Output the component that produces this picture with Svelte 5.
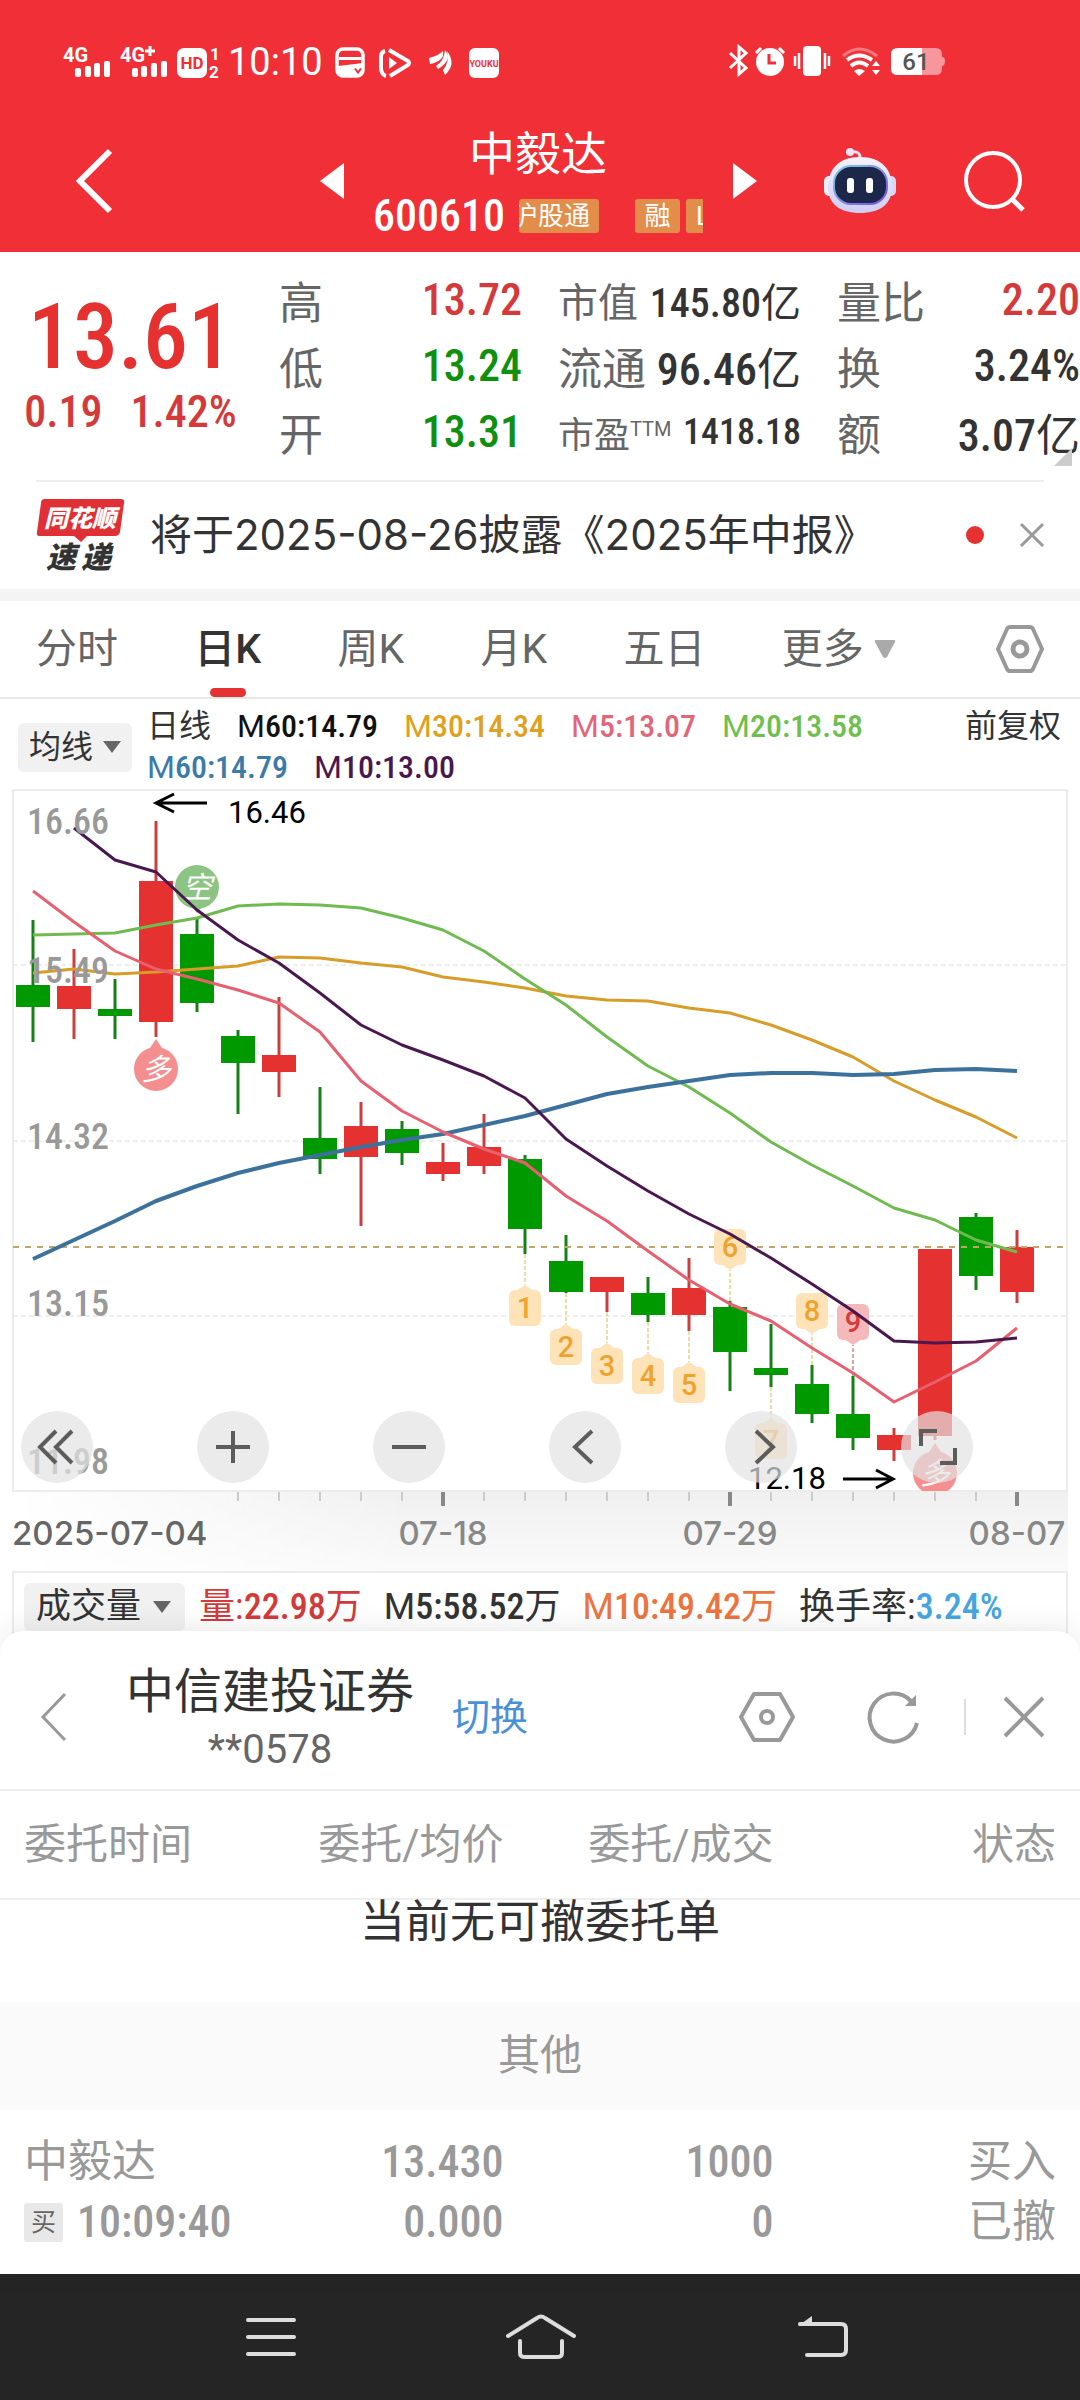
<script>
  const stats = [
    [
      { label: '高', value: '13.72', tone: 'up' },
      { label: '低', value: '13.24', tone: 'down' },
      { label: '开', value: '13.31', tone: 'down' }
    ],
    [
      { label: '市值', value: '145.80', unit: '亿', size: 'mid' },
      { label: '流通', value: '96.46', unit: '亿' },
      { label: '市盈', sup: 'TTM', value: '1418.18', size: 'small' }
    ],
    [
      { label: '量比', value: '2.20', tone: 'up' },
      { label: '换', value: '3.24%' },
      { label: '额', value: '3.07', unit: '亿' }
    ]
  ];

  const tabs = ['分时', '日K', '周K', '月K', '五日'];
  let activeTab = '日K';

  const legend = [
    { name: 'M', value: '60:14.79', color: '#111111' },
    { name: 'M', value: '30:14.34', color: '#e0a020' },
    { name: 'M', value: '5:13.07', color: '#e2667a' },
    { name: 'M', value: '20:13.58', color: '#6fbf50' },
    { name: 'M', value: '60:14.79', color: '#3c7aa8' },
    { name: 'M', value: '10:13.00', color: '#4a174f' }
  ];

  // x position of the n-th trading day
  const dayX = (i) => 33 + i * 41;

  // [rising, high, body top, body bottom, low]
  const candles = [
    [0, 921, 986, 1008, 1043],
    [1, 950, 987, 1010, 1040],
    [0, 980, 1010, 1017, 1040],
    [1, 822, 882, 1023, 1038],
    [0, 920, 935, 1004, 1013],
    [0, 1031, 1037, 1064, 1115],
    [1, 998, 1056, 1073, 1098],
    [0, 1088, 1139, 1160, 1175],
    [1, 1103, 1127, 1158, 1227],
    [0, 1122, 1130, 1154, 1166],
    [1, 1144, 1163, 1175, 1182],
    [1, 1115, 1148, 1167, 1175],
    [0, 1156, 1160, 1230, 1255],
    [0, 1236, 1262, 1293, 1294],
    [1, 1278, 1278, 1293, 1313],
    [0, 1278, 1294, 1316, 1323],
    [1, 1259, 1289, 1316, 1332],
    [0, 1302, 1308, 1353, 1392],
    [0, 1325, 1369, 1376, 1388],
    [0, 1366, 1385, 1415, 1424],
    [0, 1377, 1415, 1439, 1451],
    [1, 1429, 1436, 1451, 1462],
    [1, 1250, 1250, 1437, 1441],
    [0, 1214, 1218, 1277, 1291],
    [1, 1231, 1248, 1293, 1304]
  ];

  const averages = [
    {
      color: '#d89c28',
      width: 3,
      start: 0,
      ys: [974, 970, 975, 973, 970, 967, 958, 959, 964, 968, 978, 983, 989, 997, 1001, 1002, 1009, 1014, 1026, 1041, 1058, 1082, 1101, 1118, 1139]
    },
    {
      color: '#6fbb50',
      width: 3,
      start: 0,
      ys: [936, 935, 934, 926, 919, 907, 905, 906, 909, 919, 931, 952, 980, 1006, 1038, 1067, 1088, 1114, 1143, 1166, 1187, 1209, 1221, 1241, 1253]
    },
    {
      color: '#3c719b',
      width: 4,
      start: 0,
      ys: [1260, 1241, 1222, 1202, 1187, 1174, 1164, 1156, 1148, 1141, 1135, 1126, 1117, 1106, 1095, 1088, 1082, 1076, 1074, 1074, 1076, 1075, 1071, 1070, 1072]
    },
    {
      color: '#e8606f',
      width: 3,
      start: 0,
      ys: [892, 923, 952, 970, 980, 991, 1004, 1033, 1082, 1112, 1133, 1150, 1164, 1197, 1222, 1252, 1281, 1305, 1322, 1349, 1374, 1403, 1383, 1362, 1329]
    },
    {
      color: '#4a174f',
      width: 3,
      start: 1,
      ys: [829, 861, 873, 911, 941, 964, 994, 1026, 1046, 1061, 1077, 1099, 1140, 1167, 1192, 1215, 1235, 1259, 1285, 1312, 1342, 1344, 1343, 1339]
    }
  ];

  const points = (line) => line.ys.map((y, i) => `${dayX(i + line.start)},${y}`).join(' ');

  // numbered tags: tip is the pointed end, up = tag hangs below its candle
  const tags = [
    { n: 1, day: 12, tip: 1286, up: true },
    { n: 2, day: 13, tip: 1325, up: true },
    { n: 3, day: 14, tip: 1344, up: true },
    { n: 4, day: 15, tip: 1354, up: true },
    { n: 5, day: 16, tip: 1363, up: true },
    { n: 6, day: 17, tip: 1271, up: false },
    { n: 7, day: 18, tip: 1419, up: true },
    { n: 8, day: 19, tip: 1335, up: false },
    { n: 9, day: 20, tip: 1346, up: false, hot: true }
  ];

  const grid = [966, 1142, 1317];
  const prices = [
    ['16.66', 835],
    ['15.49', 984],
    ['14.32', 1150],
    ['13.15', 1317],
    ['11.98', 1475]
  ];
  const dates = [
    ['07-18', 10],
    ['07-29', 17],
    ['08-07', 24]
  ];
  const ticks = Array.from({ length: 20 }, (_, i) => i + 5);
  const major = (i) => i === 10 || i === 17 || i === 24;

  const tools = [
    { name: '最早', d: 'M35 20 L19 36 L35 52 M51 20 L35 36 L51 52' },
    { name: '放大', d: 'M19 36 H53 M36 20 V52' },
    { name: '缩小', d: 'M19 36 H53' },
    { name: '左移', d: 'M43 20 L26 36 L43 52' },
    { name: '右移', d: 'M31 20 L48 36 L31 52' },
    { name: '全屏', d: 'M20 35 V20 H36 M39 52 H54 V37' }
  ];
</script>

<div class="page">
  <header class="top">
    <div class="status">
      <div class="status-left">
        <svg width="162" height="36" viewBox="0 0 162 36" fill="#fff" aria-hidden="true">
          <text class="sig" x="0" y="18">4G</text>
          <g>
            <rect x="12" y="24" width="6" height="9" rx="2" />
            <rect x="22" y="22" width="6" height="11" rx="2" />
            <rect x="31" y="19" width="6" height="14" rx="2" />
            <rect x="41" y="17" width="6" height="16" rx="2" />
          </g>
          <text class="sig" x="57" y="18">4G</text>
          <path d="M82 7 h10 M87 2 v10" stroke="#fff" stroke-width="3" />
          <g>
            <rect x="69" y="24" width="6" height="9" rx="2" />
            <rect x="78" y="22" width="6" height="11" rx="2" />
            <rect x="88" y="19" width="6" height="14" rx="2" />
            <rect x="98" y="17" width="6" height="16" rx="2" />
          </g>
          <rect x="114" y="4" width="30" height="30" rx="7" />
          <text class="hd" x="129" y="25" text-anchor="middle">HD</text>
          <text class="sim" x="147" y="16">1</text>
          <text class="sim" x="146" y="34">2</text>
        </svg>
        <span class="clock">10:10</span>
        <svg width="170" height="36" viewBox="0 0 170 36" fill="none" aria-hidden="true">
          <rect x="2" y="5" width="26" height="27" rx="6" stroke="#fff" stroke-width="3.5" />
          <path d="M4 14.500 H26" stroke="#fff" stroke-width="3" />
          <path d="M3 22 L28 19 V28 Q28 32 23 32 H8 Q3 32 3 27Z" fill="#fff" />
          <path d="M20 24.500 l3 4 l3 -4" stroke="#f12f37" stroke-width="2" />
          <path d="M54 6 L73 17 Q75 19 73 21 L55 32 M50 7 Q46 8 46 13 V25 Q47 31 51 32" stroke="#fff" stroke-width="4" />
          <path d="M54 13 L62 19 L54 25Z" fill="#fff" />
          <path d="M94 14 Q103 12 108 7 Q110 17 95 20Z M101 22 Q109 17 110 6 Q118 16 103 25Z M108 26 Q115 18 112 7 Q122 20 110 31Z" fill="#fff" />
          <rect x="134" y="4" width="30" height="30" rx="6" fill="#fff" />
          <text class="youku" x="149" y="23" text-anchor="middle">YOUKU</text>
        </svg>
      </div>
      <div class="status-right">
        <svg width="220" height="36" viewBox="0 0 220 36" fill="none" stroke="#fff" aria-hidden="true">
          <path d="M2 11 L18 26 L11 32 V5 L18 11 L2 26" stroke-width="3" />
          <circle cx="42" cy="20" r="14" fill="#fff" stroke="none" />
          <path d="M28 11 L33 6 M56 11 L51 6" stroke-width="3" />
          <path d="M41 12 V21 H48" stroke="#f12f37" stroke-width="3" />
          <rect x="75" y="4" width="18" height="30" rx="4" fill="#fff" stroke="none" />
          <path d="M67 14 V24 M71 11 V27 M97 11 V27 M101 14 V24" stroke-width="2.500" />
          <path d="M115 14 Q131 0 149 14" stroke-width="3" opacity=".35" />
          <path d="M119 18 Q131 9 144 18 M123 24 Q131 17 140 24" stroke-width="4" />
          <path d="M126 29 Q131 25 137 29 L131 34Z" fill="#fff" stroke="none" />
          <path d="M144 24 L148 19 L152 24Z M144 28 L148 33 L152 28Z" fill="#fff" stroke="none" />
          <path d="M170 6 H194 V33 H170 Q163 33 163 27 V12 Q163 6 170 6Z" fill="#fff" stroke="none" />
          <path d="M194 6 H207 Q214 6 214 12 V15 Q217 15 217 19 Q217 24 214 24 V27 Q214 33 207 33 H194Z" fill="#f8979b" stroke="none" />
          <text class="battery" x="188" y="28" text-anchor="middle">61</text>
        </svg>
      </div>
    </div>

    <div class="titlebar">
      <button class="icon back" aria-label="返回">
        <svg width="44" height="68" viewBox="0 0 44 68"><path d="M38 4 L8 34 L38 64" fill="none" stroke="#fff" stroke-width="6" /></svg>
      </button>
      <button class="icon prev" aria-label="上一只">
        <svg width="24" height="36" viewBox="0 0 24 36"><path d="M24 0 V36 L0 18Z" fill="#fff" /></svg>
      </button>
      <div class="stock">
        <h1>中毅达</h1>
        <div class="code">
          <span class="num">600610</span>
          <span class="marks">
            <span class="mark first"><span>沪股通</span></span>
            <span class="mark">融</span>
            <span class="mark last"><span>L1</span></span>
          </span>
        </div>
      </div>
      <button class="icon next" aria-label="下一只">
        <svg width="24" height="36" viewBox="0 0 24 36"><path d="M0 0 V36 L24 18Z" fill="#fff" /></svg>
      </button>
      <button class="icon robot" aria-label="智能助手">
        <svg width="72" height="70" viewBox="0 0 72 70">
          <defs>
            <linearGradient id="shell" x1="0" y1="0" x2="0" y2="1">
              <stop offset="0" stop-color="#f4f2fc" />
              <stop offset="1" stop-color="#cfcdf2" />
            </linearGradient>
            <linearGradient id="rim" x1="0" y1="0" x2="1" y2="1">
              <stop offset="0" stop-color="#7fd0e8" />
              <stop offset="1" stop-color="#7a4be0" />
            </linearGradient>
          </defs>
          <path d="M27 6 Q37 4 36 14" fill="none" stroke="#e9def2" stroke-width="3" />
          <circle cx="26" cy="6" r="4" fill="#f0e4f4" />
          <rect x="0" y="30" width="12" height="20" rx="5" fill="#eeeefa" />
          <rect x="60" y="30" width="12" height="20" rx="5" fill="#d6d8f6" />
          <path d="M36 11 C58 11 68 24 68 41 C68 58 56 67 36 67 C16 67 4 58 4 41 C4 24 14 11 36 11Z" fill="url(#shell)" />
          <rect x="10" y="20" width="53" height="38" rx="17" fill="#1c2749" stroke="url(#rim)" stroke-width="2" />
          <rect x="23" y="32" width="7" height="15" rx="3" fill="#fff" />
          <rect x="42" y="32" width="7" height="15" rx="3" fill="#fff" />
        </svg>
      </button>
      <button class="icon search" aria-label="搜索">
        <svg width="62" height="62" viewBox="0 0 62 62" fill="none" stroke="#fff"><circle cx="29" cy="30" r="27" stroke-width="4" /><path d="M48 49 L59 60" stroke-width="5" /></svg>
      </button>
    </div>
  </header>

  <section class="quote">
    <div class="price">
      <strong class="num">13.61</strong>
      <p class="num"><span>0.19</span><span>1.42%</span></p>
    </div>
    {#each stats as column}
      <dl>
        {#each column as item}
          <div class="stat {item.size ?? ''}">
            <dt>{item.label}{#if item.sup}<sup>{item.sup}</sup>{/if}</dt>
            <dd class={item.tone ?? ''}><span class="num">{item.value}</span>{item.unit ?? ''}</dd>
          </div>
        {/each}
      </dl>
    {/each}
    <i class="corner"></i>
  </section>

  <section class="news">
    <svg class="badge" width="90" height="74" viewBox="0 0 90 74" role="img" aria-label="同花顺速递">
      <path d="M9 1 H85 Q89 1 88 5 L84 34 Q83 38 79 38 H51 L45 44 L38 38 H4 Q0 38 1 34 L5 5 Q5 1 9 1Z" fill="#e03036" />
      <text x="44" y="29" text-anchor="middle" fill="#fff" font-size="24">同花顺</text>
      <text x="25" y="70" text-anchor="middle" fill="#333" font-size="30">速</text>
      <text x="60" y="70" text-anchor="middle" fill="#333" font-size="30">递</text>
    </svg>
    <a href="#news">将于2025-08-26披露《2025年中报》</a>
    <i class="dot"></i>
    <button class="icon" aria-label="关闭">
      <svg width="24" height="24" viewBox="0 0 24 24"><path d="M1 1 L23 23 M23 1 L1 23" stroke="#999" stroke-width="3" /></svg>
    </button>
  </section>

  <nav class="tabs">
    {#each tabs as tab}
      <button class:active={tab === activeTab} on:click={() => (activeTab = tab)}>{tab}</button>
    {/each}
    <button class="more">更多<svg width="22" height="20" viewBox="0 0 22 20"><path d="M2 1 H20 Q22 1 21 3 L13 18 Q11 20 9 18 L1 3 Q0 1 2 1Z" fill="#aaa" /></svg></button>
    <button class="gear" aria-label="设置">
      <svg width="48" height="48" viewBox="0 0 48 48" fill="none" stroke="#999" stroke-width="4"><path d="M14 2 H34 Q36 2 37 4 L46 24 L37 44 Q36 46 34 46 H14 Q12 46 11 44 L2 24 L11 4 Q12 2 14 2Z" /><circle cx="24" cy="24" r="7" stroke-width="5" /></svg>
    </button>
  </nav>

  <section class="legend">
    <button class="drop">均线<svg width="18" height="12" viewBox="0 0 18 12"><path d="M0 0 H18 L9 12Z" fill="#666" /></svg></button>
    <div class="items">
      <span>日线</span>
      {#each legend as item}
        <span style="color: {item.color}">{item.name}<b class="num">{item.value}</b></span>
      {/each}
    </div>
    <span class="adjust">前复权</span>
  </section>

  <section class="chart">
    <svg class="plot" viewBox="0 790 1080 782">
      <defs>
        <linearGradient id="fade" x1="0" y1="0" x2="0" y2="1">
          <stop offset="0" stop-color="#f0f0f0" />
          <stop offset="1" stop-color="#fafafa" />
        </linearGradient>
        <linearGradient id="side" x1="0" y1="0" x2="1" y2="0">
          <stop offset="0" stop-color="#fff" />
          <stop offset="1" stop-color="#fff" stop-opacity="0" />
        </linearGradient>
        <clipPath id="frame"><rect x="12" y="790" width="1056" height="702" /></clipPath>
      </defs>

      <rect x="12" y="1492" width="1056" height="80" fill="url(#fade)" />
      <rect x="12" y="1492" width="400" height="80" fill="url(#side)" />
      <rect x="13" y="791" width="1054" height="701" fill="none" stroke="#ececec" stroke-width="2" />

      {#each grid as y}
        <line x1="13" x2="1066" y1={y} y2={y} stroke="#dedede" stroke-dasharray="5 3" />
      {/each}

      {#each candles as [up, high, top, bottom, low], i}
        <line x1={dayX(i)} x2={dayX(i)} y1={high} y2={low} stroke={up ? '#cc3d3d' : '#158015'} stroke-width="3" />
        <rect x={dayX(i) - 17} y={top} width="34" height={bottom - top} fill={up ? '#e63131' : '#009900'} />
      {/each}

      <line x1="13" x2="1066" y1="1248" y2="1248" stroke="#c2a56c" stroke-width="2" stroke-dasharray="6 6" />

      <g clip-path="url(#frame)">
        <path d="M192 908 L197 914 L202 908Z" fill="#8cc483" />
        <circle cx="197" cy="888" r="22" fill="#8cc483" />
        <text class="mood" x="197" y="899" text-anchor="middle">空</text>
        <path d="M148 1052 L156 1040 L164 1052Z" fill="#f58e8e" />
        <circle cx="156" cy="1070" r="22" fill="#f58e8e" />
        <text class="mood" x="156" y="1081" text-anchor="middle">多</text>
        <path d="M927 1456 L935 1444 L943 1456Z" fill="#f58e8e" />
        <circle cx="935" cy="1474" r="22" fill="#f58e8e" />
        <text class="mood" x="935" y="1485" text-anchor="middle">多</text>
      </g>

      {#each tags as tag}
        {@const x = dayX(tag.day)}
        {@const dir = tag.up ? 1 : -1}
        <line
          x1={x}
          x2={x}
          y1={tag.up ? candles[tag.day][4] : candles[tag.day][1]}
          y2={tag.tip}
          stroke={tag.hot ? '#a05050' : '#d8b850'}
          stroke-dasharray="4 2"
        />
        <g fill={tag.hot ? '#f6b9bb' : '#fee2b8'}>
          <rect x={x - 16} y={tag.up ? tag.tip + 5 : tag.tip - 41} width="32" height="36" rx="6" />
          <path d="M{x - 9} {tag.tip + 6 * dir} L{x} {tag.tip} L{x + 9} {tag.tip + 6 * dir}Z" />
        </g>
        <text class="count" {x} y={tag.up ? tag.tip + 33 : tag.tip - 13} text-anchor="middle" fill={tag.hot ? '#d83a3a' : '#eea32f'}>{tag.n}</text>
      {/each}

      {#each averages as line}
        <polyline points={points(line)} fill="none" stroke={line.color} stroke-width={line.width} stroke-linejoin="round" />
      {/each}

      {#each prices as [label, y]}
        <text class="axis" x="27" {y}>{label}</text>
      {/each}

      <g fill="none" stroke="#000" stroke-width="3">
        <path d="M207 804 H157 M174 795 L156 804 L174 813" />
        <path d="M843 1480 H892 M876 1471 L893 1480 L876 1489" />
      </g>
      <text class="peak" x="228" y="824">16.46</text>
      <text class="peak" x="748" y="1490">12.18</text>

      {#each ticks as i}
        <line x1={dayX(i)} x2={dayX(i)} y1="1493" y2={major(i) ? 1507 : 1502} stroke={major(i) ? '#888' : '#ccc'} stroke-width={major(i) ? 4 : 2} />
      {/each}
      <text class="date first" x="12" y="1546">2025-07-04</text>
      {#each dates as [label, i]}
        <text class="date" x={dayX(i)} y="1546" text-anchor="middle">{label}</text>
      {/each}
    </svg>
    <div class="tools">
      {#each tools as tool}
        <button aria-label={tool.name}>
          <svg width="72" height="72" viewBox="0 0 72 72"><path d={tool.d} fill="none" stroke="#5c5c5c" stroke-width="4" /></svg>
        </button>
      {/each}
    </div>
  </section>

  <section class="volume">
    <button class="drop">成交量<svg width="18" height="12" viewBox="0 0 18 12"><path d="M0 0 H18 L9 12Z" fill="#666" /></svg></button>
    <span class="red">量:<b class="num">22.98</b>万</span>
    <span>M<b class="num">5:58.52</b>万</span>
    <span class="orange">M<b class="num">10:49.42</b>万</span>
    <span>换手率:<b class="num blue">3.24%</b></span>
  </section>

  <section class="sheet">
    <header class="broker">
      <button class="icon" aria-label="返回">
        <svg width="28" height="50" viewBox="0 0 28 50"><path d="M25 2 L3 25 L25 48" fill="none" stroke="#999" stroke-width="3" /></svg>
      </button>
      <div class="account">
        <h2>中信建投证券</h2>
        <p>**0578</p>
      </div>
      <a class="switch" href="#switch">切换</a>
      <button class="icon setting" aria-label="设置">
        <svg width="58" height="52" viewBox="0 0 58 52" fill="none" stroke="#999"><path d="M16 3 H42 L55 26 L42 49 H16 L3 26Z" stroke-width="4" stroke-linejoin="round" /><circle cx="29" cy="26" r="6" stroke-width="4" /></svg>
      </button>
      <button class="icon refresh" aria-label="刷新">
        <svg width="54" height="54" viewBox="0 0 54 54"><path d="M45 11 A24 24 0 1 0 51 33" fill="none" stroke="#999" stroke-width="4" /><path d="M50 5 V16 H39Z" fill="#999" /></svg>
      </button>
      <i class="bar"></i>
      <button class="icon" aria-label="关闭">
        <svg width="44" height="44" viewBox="0 0 44 44"><path d="M3 3 L41 41 M41 3 L3 41" stroke="#999" stroke-width="4" /></svg>
      </button>
    </header>

    <table>
      <thead>
        <tr>
          <th>委托时间</th>
          <th>委托/均价</th>
          <th>委托/成交</th>
          <th>状态</th>
        </tr>
      </thead>
      <tbody>
        <tr class="empty"><td colspan="4">当前无可撤委托单</td></tr>
        <tr class="group"><td colspan="4">其他</td></tr>
        <tr class="order">
          <td><div>中毅达</div><div class="time"><span class="buy">买</span><span class="num">10:09:40</span></div></td>
          <td><div class="num">13.430</div><div class="num">0.000</div></td>
          <td><div class="num">1000</div><div class="num">0</div></td>
          <td><div>买入</div><div>已撤</div></td>
        </tr>
      </tbody>
    </table>
  </section>

  <footer class="keys">
    <button aria-label="菜单">
      <svg width="50" height="42" viewBox="0 0 50 42"><path d="M2 4 H48 M2 21 H48 M2 38 H48" stroke="#ddd" stroke-width="4" stroke-linecap="round" /></svg>
    </button>
    <button class="home" aria-label="主页">
      <svg width="72" height="46" viewBox="0 0 72 46" fill="none" stroke="#ddd" stroke-width="4" stroke-linecap="round"><path d="M3 22 L32 4 Q36 1 40 4 L69 22" /><path d="M15 27 V39 Q15 43 20 43 H52 Q57 43 57 39 V27" /></svg>
    </button>
    <button aria-label="后退">
      <svg width="52" height="46" viewBox="0 0 52 46"><path d="M3 10 H44 Q49 10 49 15 V36 Q49 41 44 41 H10" fill="none" stroke="#ddd" stroke-width="4" stroke-linecap="round" /><path d="M15 2 V12 H1Z" fill="#ddd" /></svg>
    </button>
  </footer>
</div>

<style>
  :global(body) {
    background: #fff;
  }

  .page {
    font-family: Roboto, 'Noto Sans CJK SC', sans-serif;
    color: #333;
    overflow: hidden;
  }

  .num {
    font-family: 'Roboto Condensed', Roboto, sans-serif;
    font-weight: 500;
  }

  h1, h2, p, dl, dd {
    margin: 0;
    font-weight: normal;
  }

  button {
    padding: 0;
    border: 0;
    background: none;
    color: inherit;
    font: inherit;
    cursor: pointer;
  }

  a {
    color: inherit;
    text-decoration: none;
  }

  svg {
    display: block;
    overflow: visible;
  }

  .icon {
    flex: none;
  }

  .top {
    padding: 42px 0 14px;
    background: #f12f37;
    color: #fff;
  }

  .status {
    display: flex;
    justify-content: space-between;
    padding: 0 132px 0 63px;
  }

  .status-left {
    display: flex;
    align-items: center;
  }

  .clock {
    padding: 0 12px 0 3px;
    font-size: 38px;
    line-height: 40px;
  }

  .sig {
    font-size: 20px;
    font-weight: bold;
  }

  .hd {
    font-size: 17px;
    font-weight: bold;
    fill: #f12f37;
  }

  .sim {
    font-size: 17px;
    font-weight: bold;
  }

  .youku {
    font-size: 9px;
    font-weight: bold;
    fill: #f12f37;
  }

  .battery {
    font-size: 24px;
    font-weight: 500;
    fill: #555;
    stroke: none;
  }

  .titlebar {
    display: flex;
    align-items: center;
    padding: 42px 54px 0 72px;
  }

  .prev {
    margin: 0 auto;
    padding-left: 174px;
  }

  .stock {
    width: 330px;
    text-align: center;
  }

  .stock h1 {
    font-size: 46px;
    line-height: 60px;
  }

  .code {
    display: flex;
    align-items: center;
    justify-content: center;
    gap: 14px;
    margin-top: 10px;
    font-size: 44px;
    line-height: 44px;
    white-space: nowrap;
  }

  .marks {
    display: flex;
    overflow: hidden;
    width: 187px;
    font-size: 26px;
    line-height: 34px;
  }

  .mark {
    flex: none;
    width: 45px;
    border-radius: 3px;
    background: #e38d4b;
  }

  .mark.first {
    display: flex;
    justify-content: flex-end;
    overflow: hidden;
    width: 80px;
    margin-right: 36px;
    padding-right: 9px;
    box-sizing: border-box;
  }

  .mark.last {
    margin-left: 6px;
    padding-left: 10px;
    text-align: left;
  }

  .next {
    margin: 0 auto;
  }

  .robot {
    margin: 0 68px 0 38px;
  }

  .quote {
    position: relative;
    display: grid;
    grid-template-columns: repeat(4, 1fr);
    gap: 36px;
    padding: 15px 0;
  }

  .price {
    padding-top: 22px;
    margin-right: -18px;
    color: #e63131;
    text-align: center;
  }

  .price strong {
    display: block;
    font-size: 90px;
    line-height: 98px;
  }

  .price p {
    display: flex;
    justify-content: center;
    gap: 28px;
    font-size: 44px;
    line-height: 50px;
    color: #d43a3a;
  }

  .stat {
    display: flex;
    align-items: center;
    justify-content: space-between;
    height: 66px;
    font-size: 44px;
    white-space: nowrap;
  }

  .stat.mid {
    font-size: 40px;
  }

  .stat.small {
    font-size: 36px;
  }

  dt {
    color: #666;
  }

  dt sup {
    font-size: 20px;
    line-height: 0;
    vertical-align: 12px;
  }

  .up {
    color: #d43a3a;
  }

  .down {
    color: #0f900f;
  }

  .corner {
    position: absolute;
    right: 8px;
    bottom: 14px;
    border-left: 18px solid transparent;
    border-bottom: 18px solid #ccc;
  }

  .news {
    display: flex;
    align-items: center;
    margin: 0 36px;
    padding: 16px 0 17px;
    border-top: 2px solid #eee;
  }

  .news a {
    flex: 1;
    padding-left: 24px;
    font-family: Inter, 'Noto Sans CJK SC', sans-serif;
    font-size: 42px;
    line-height: 60px;
    white-space: nowrap;
  }

  .badge text {
    font-weight: 900;
    font-style: italic;
  }

  .dot {
    width: 18px;
    height: 18px;
    margin-right: 36px;
    border-radius: 50%;
    background: #e63131;
  }

  .tabs {
    display: flex;
    align-items: center;
    justify-content: space-between;
    padding: 0 36px;
    border-top: 12px solid #f4f4f4;
    border-bottom: 2px solid #e8e8e8;
    font-size: 41px;
    line-height: 96px;
    color: #666;
  }

  .active {
    position: relative;
    color: #333;
    font-weight: 500;
  }

  .active::after {
    content: '';
    position: absolute;
    left: 50%;
    bottom: 0;
    width: 36px;
    height: 9px;
    margin-left: -18px;
    border-radius: 5px;
    background: #e63131;
  }

  .more {
    display: flex;
    align-items: center;
    gap: 10px;
  }

  .gear {
    margin-left: 24px;
  }

  .legend {
    display: flex;
    align-items: center;
    padding: 7px 19px 1px 18px;
    font-size: 32px;
    line-height: 41px;
    white-space: nowrap;
  }

  .drop {
    display: flex;
    flex: none;
    align-items: center;
    gap: 10px;
    padding: 4px 11px;
    border-radius: 6px;
    background: #f1f1f1;
  }

  .items {
    display: flex;
    flex: 1;
    flex-wrap: wrap;
    column-gap: 26px;
    padding-left: 15px;
  }

  .adjust {
    align-self: flex-start;
  }

  .chart {
    position: relative;
  }

  .plot {
    width: 100%;
  }

  .axis {
    font-family: 'Roboto Condensed', Roboto, sans-serif;
    font-size: 36px;
    font-weight: 500;
    fill: #999;
  }

  .mood {
    font-size: 30px;
    font-style: italic;
    fill: #fff;
  }

  .count {
    font-size: 29px;
    font-weight: 500;
  }

  .peak {
    font-size: 31px;
  }

  .date {
    font-family: Inter, sans-serif;
    font-size: 33px;
    font-weight: 500;
    fill: #888;
  }

  .date.first {
    fill: #666;
  }

  .tools {
    position: absolute;
    left: 21px;
    right: 107px;
    bottom: 88px;
    display: flex;
    justify-content: space-between;
  }

  .tools button {
    border-radius: 50%;
    background: rgba(226, 226, 226, 0.7);
  }

  .volume {
    display: flex;
    align-items: flex-start;
    gap: 22px;
    margin: 0 12px;
    padding: 10px 10px 24px;
    border: 2px solid #ececec;
    border-bottom: 0;
    background: linear-gradient(#fff 60%, #f3f3f3);
    font-size: 36px;
    line-height: 48px;
    white-space: nowrap;
  }

  .volume .drop {
    gap: 12px;
    padding: 0 14px 0 12px;
    margin-right: -8px;
    font-size: 35px;
  }

  .red {
    color: #d43a3a;
  }

  .orange {
    color: #ec7440;
  }

  .blue {
    color: #46a5e0;
  }

  .sheet {
    position: relative;
    margin-top: -24px;
    border-radius: 24px 24px 0 0;
    background: #fff;
    box-shadow: 0 -4px 30px rgba(0, 0, 0, 0.08);
  }

  .broker {
    display: flex;
    align-items: center;
    padding: 28px 34px 14px 40px;
    border-bottom: 2px solid #eee;
  }

  .account {
    margin: 0 38px 0 58px;
    text-align: center;
  }

  .account h2 {
    font-size: 48px;
    line-height: 66px;
  }

  .account p {
    font-size: 40px;
    line-height: 50px;
    color: #666;
  }

  .switch {
    color: #4a90d9;
    font-size: 38px;
    line-height: 48px;
  }

  .setting {
    margin-left: auto;
  }

  .refresh {
    margin: 0 44px 0 70px;
  }

  .bar {
    width: 2px;
    height: 36px;
    margin-right: 36px;
    background: #ddd;
  }

  table {
    width: 100%;
    border-collapse: collapse;
    table-layout: fixed;
    color: #999;
    font-size: 42px;
    text-align: right;
  }

  th, td {
    box-sizing: border-box;
    padding: 0 4px 0 0;
    font-weight: normal;
  }

  th {
    line-height: 107px;
    border-bottom: 2px solid #eee;
  }

  th:first-child, td:first-child {
    padding-left: 24px;
    text-align: left;
  }

  th:nth-child(1) {
    width: 22%;
  }

  th:nth-child(2), th:nth-child(3) {
    width: 25%;
  }

  th:last-child, td:last-child {
    padding-right: 24px;
  }

  .empty td:first-child, .group td:first-child {
    padding: 0;
    text-align: center;
  }

  .empty td:first-child {
    padding-bottom: 56px;
    color: #333;
    font-size: 45px;
    line-height: 46px;
  }

  .group td {
    background: #fafafa;
    line-height: 108px;
  }

  .order td {
    padding-top: 22px;
    padding-bottom: 22px;
    font-size: 44px;
    line-height: 60px;
  }

  .time {
    display: flex;
    align-items: center;
    gap: 14px;
  }

  .buy {
    padding: 0 7px;
    border-radius: 3px;
    background: #e8e8e8;
    color: #666;
    font-size: 25px;
    line-height: 39px;
  }

  .keys {
    display: flex;
    justify-content: space-between;
    align-items: center;
    min-height: 126px;
    padding: 0 231px 0 246px;
    background: #252525;
  }

  .home {
    margin-right: 12px;
  }
</style>
